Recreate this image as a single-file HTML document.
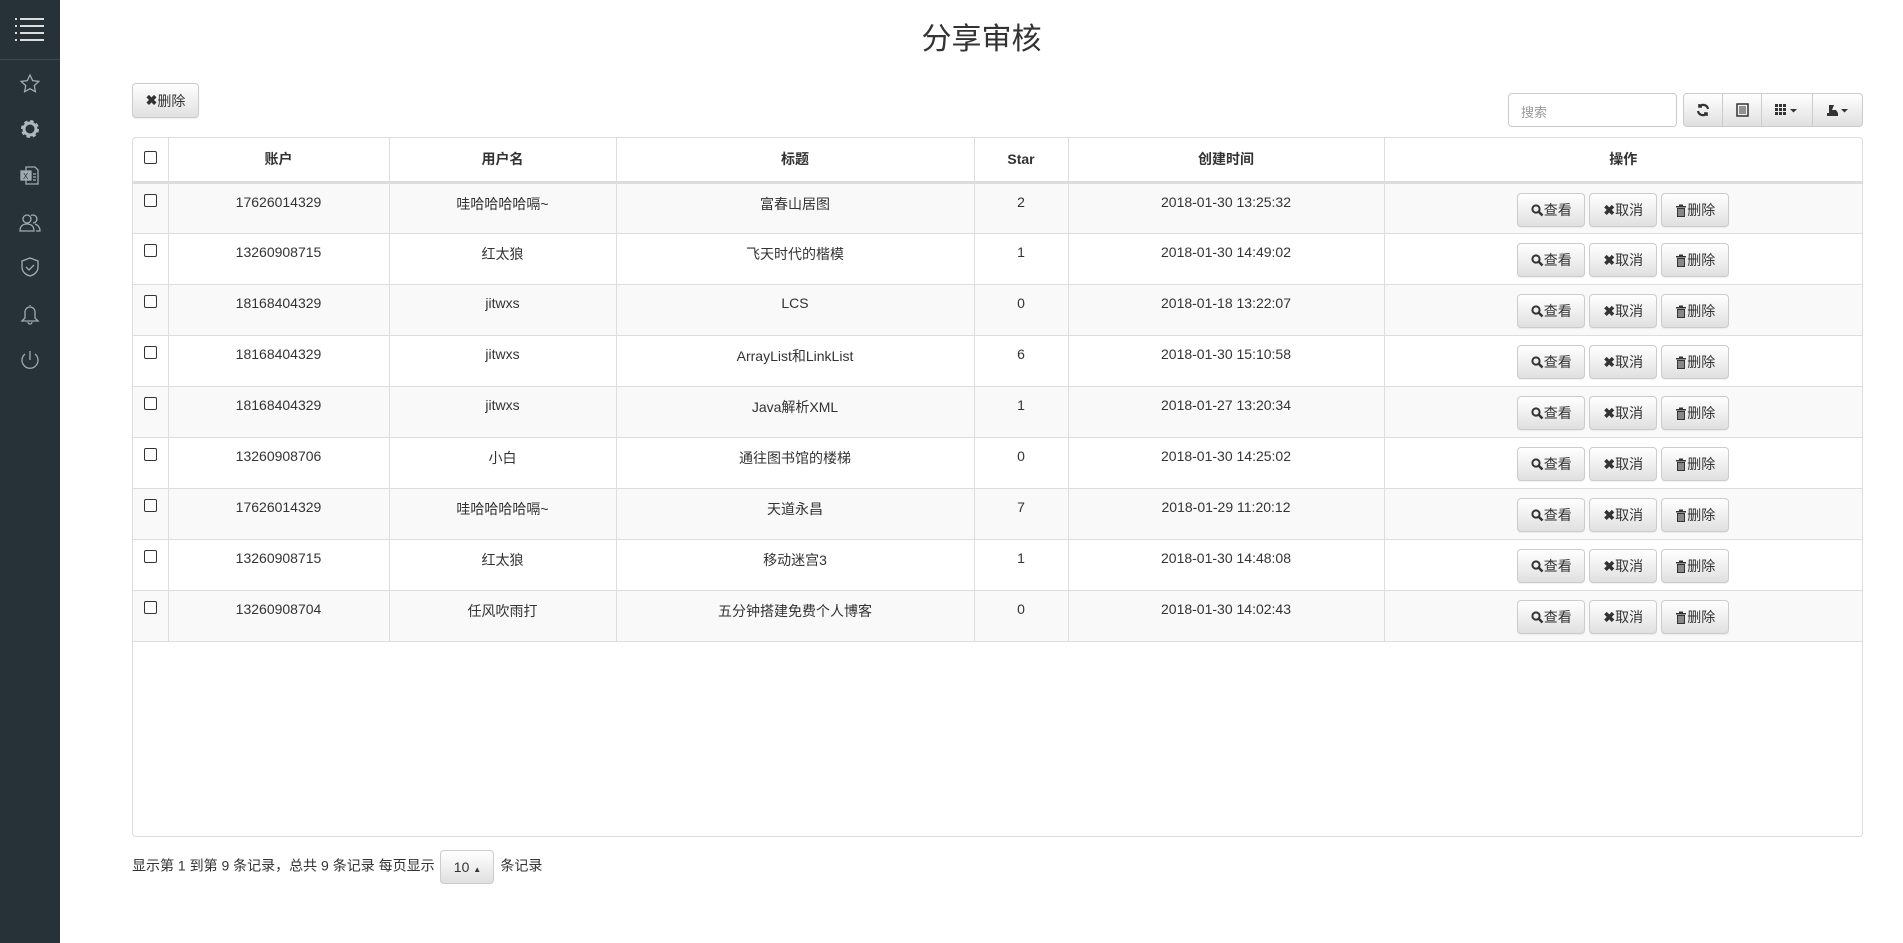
<!DOCTYPE html>
<html><head><meta charset="utf-8"><style>
*{box-sizing:border-box;margin:0;padding:0}
body{width:1903px;height:943px;background:#fff;font-family:"Liberation Sans","Noto Sans CJK SC",sans-serif;font-size:14px;color:#333;position:relative;overflow:hidden}
.side{position:absolute;left:0;top:0;width:60px;height:943px;background:#263238}
.side .top{height:60px;border-bottom:1px solid #3c4a52}
.ico{position:absolute;left:18px;width:24px;height:24px}
h1{position:absolute;left:60px;right:0;top:14px;text-align:center;font-size:30px;font-weight:normal;color:#333}
.btn{position:absolute;border:1px solid #ccc;border-radius:4px;background:linear-gradient(#fff,#e0e0e0);display:flex;align-items:center;justify-content:center;font-size:14px;color:#333;box-shadow:0 1px 1px rgba(0,0,0,.08)}
.search{position:absolute;left:1508px;top:93px;width:169px;height:34px;border:1px solid #ccc;border-radius:4px;padding:8px 12px;color:#999;font-size:13px}
.tb{position:absolute;top:93px;height:34px;border:1px solid #ccc;background:linear-gradient(#fff,#e0e0e0);display:flex;align-items:center;justify-content:center}
.wrap{position:absolute;left:132px;top:137px;width:1731px;height:700px;border:1px solid #ddd;border-radius:4px}
table{border-collapse:collapse;width:100%;table-layout:fixed}
th{height:44px;font-weight:bold;border-left:1px solid #ddd;border-bottom:3px solid #ddd;text-align:center;font-size:14px}
td{height:51px;border-left:1px solid #ddd;border-top:1px solid #ddd;text-align:center;vertical-align:top;padding-top:10px}
th:first-child,td:first-child{border-left:none}
tr.odd td{background:#f9f9f9}
.cb{display:inline-block;width:13px;height:13px;border:1px solid #333;background:#fff;border-radius:2px}
td.op{padding-top:9px;white-space:nowrap}
.ob{display:inline-block;width:68px;height:34px;line-height:32px;border:1px solid #ccc;border-radius:4px;background:linear-gradient(#fff,#e0e0e0);margin:0 2px;vertical-align:top;font-size:14px;box-shadow:0 1px 1px rgba(0,0,0,.06)}
.ob svg{vertical-align:-2px}
.foot{position:absolute;left:132px;top:850px;font-size:14px}
</style></head><body>
<div class="side"><div class="top">
<svg style="position:absolute;left:15px;top:17px" width="30" height="25"><g fill="#ddd"><rect x="0" y="1" width="2" height="2"/><rect x="0" y="8" width="2" height="2"/><rect x="0" y="15" width="2" height="2"/><rect x="0" y="22" width="2" height="2"/><rect x="5" y="1" width="24" height="2"/><rect x="5" y="8" width="24" height="2"/><rect x="5" y="15" width="24" height="2"/><rect x="5" y="22" width="24" height="2"/></g></svg></div>
<svg class="ico" style="top:72px" viewBox="0 0 24 24" fill="none" stroke="#a0aab2" stroke-width="1.3"><path d="M12 3l2.7 5.6 6.1.8-4.5 4.2 1.1 6.1L12 16.8l-5.4 2.9 1.1-6.1L3.2 9.4l6.1-.8z"/></svg>
<svg class="ico" style="top:117px" viewBox="0 0 24 24"><circle cx="12" cy="12" r="7" fill="none" stroke="#b0b8be" stroke-width="4" stroke-dasharray="3 2.5"/><circle cx="12" cy="12" r="6" fill="none" stroke="#b0b8be" stroke-width="3"/></svg>
<svg class="ico" style="top:163px" viewBox="0 0 24 24" fill="none" stroke="#a0aab2" stroke-width="1.3"><path d="M8 4h9l3 3v14H8z"/><rect x="3" y="8" width="10" height="9" fill="#a0aab2"/><text x="5" y="16" font-size="8" fill="#263238" stroke="none" font-family="Liberation Sans">X</text><path d="M15 11h3M15 14h3M15 17h3"/></svg>
<svg class="ico" style="top:210px" viewBox="0 0 24 24" fill="none" stroke="#a0aab2" stroke-width="1.3"><circle cx="9" cy="9" r="4"/><path d="M2 21c0-5 3-7 7-7s7 2 7 7z"/><path d="M13 5.5a4 4 0 1 1 2 7.5M17 14c3 1 5 3 5 7h-4"/></svg>
<svg class="ico" style="top:255px" viewBox="0 0 24 24" fill="none" stroke="#a0aab2" stroke-width="1.3"><path d="M12 3l8 3v6c0 5-4 8-8 9-4-1-8-4-8-9V6z"/><path d="M8 12l3 3 5-5"/></svg>
<svg class="ico" style="top:302px" viewBox="0 0 24 24" fill="none" stroke="#a0aab2" stroke-width="1.3"><path d="M12 3v1M7 10a5 5 0 0 1 10 0v6l3 3H4l3-3z"/><path d="M10 20a2 2 0 0 0 4 0"/></svg>
<svg class="ico" style="top:348px" viewBox="0 0 24 24" fill="none" stroke="#a0aab2" stroke-width="1.3"><path d="M12 3v9M7 6a8 8 0 1 0 10 0"/></svg>
</div>
<h1>分享审核</h1>
<div class="btn" style="left:132px;top:83px;width:67px;height:35px"><b style="font-size:14px">✖</b>删除</div>
<div class="search">搜索</div>
<div class="tb" style="left:1683px;width:40px;border-radius:4px 0 0 4px"><svg width="14" height="14" viewBox="0 0 14 14" fill="none" stroke="#333" stroke-width="2.2"><path d="M12 6a5 5 0 0 0-9-2M2 8a5 5 0 0 0 9 2"/><path d="M3 1v3h3M11 13v-3H8" stroke-width="1.6"/></svg></div>
<div class="tb" style="left:1722px;width:40px"><svg width="13" height="14"><rect x="1" y="1" width="11" height="12" fill="none" stroke="#333" stroke-width="1.5"/><path d="M3 4h7M3 6h7M3 8h7M3 10h7" stroke="#333"/></svg></div>
<div class="tb" style="left:1761px;width:52px"><svg width="24" height="12"><g fill="#333"><rect x="0" y="0" width="3" height="3"/><rect x="4" y="0" width="3" height="3"/><rect x="8" y="0" width="3" height="3"/><rect x="0" y="4" width="3" height="3"/><rect x="4" y="4" width="3" height="3"/><rect x="8" y="4" width="3" height="3"/><rect x="0" y="8" width="3" height="3"/><rect x="4" y="8" width="3" height="3"/><rect x="8" y="8" width="3" height="3"/><path d="M15 5h7l-3.5 3.5z"/></g></svg></div>
<div class="tb" style="left:1812px;width:51px;border-radius:0 4px 4px 0"><svg width="24" height="14"><g fill="#333"><path d="M1 10h11v3H1z"/><path d="M3 2h5l-2 5h4l2 3H3z"/><path d="M15 6h7l-3.5 3.5z"/></g></svg></div>
<div class="wrap"><table>
<colgroup><col style="width:35px"><col style="width:221px"><col style="width:227px"><col style="width:358px"><col style="width:94px"><col style="width:316px"><col></colgroup>
<tr><th><span class="cb"></span></th><th>账户</th><th>用户名</th><th>标题</th><th>Star</th><th>创建时间</th><th>操作</th></tr>
<!--R-->
<tr class="odd"><td><span class="cb"></span></td><td>17626014329</td><td>哇哈哈哈哈嗝~</td><td>富春山居图</td><td>2</td><td>2018-01-30 13:25:32</td><td class="op"><span class="ob"><svg width="13" height="13" viewBox="0 0 13 13"><circle cx="5" cy="5" r="3.6" fill="none" stroke="#333" stroke-width="2"/><path d="M7.5 7.5l4 4" stroke="#333" stroke-width="2.5"/></svg>查看</span><span class="ob"><b>✖</b>取消</span><span class="ob"><svg width="12" height="13" viewBox="0 0 12 13"><path d="M1 2h10v1.5H1zM4 0.5h4v1.5H4zM2 4h8v9H2z" fill="#333"/><path d="M4 5v7M6 5v7M8 5v7" stroke="#ddd"/></svg>删除</span></td></tr>
<tr><td><span class="cb"></span></td><td>13260908715</td><td>红太狼</td><td>飞天时代的楷模</td><td>1</td><td>2018-01-30 14:49:02</td><td class="op"><span class="ob"><svg width="13" height="13" viewBox="0 0 13 13"><circle cx="5" cy="5" r="3.6" fill="none" stroke="#333" stroke-width="2"/><path d="M7.5 7.5l4 4" stroke="#333" stroke-width="2.5"/></svg>查看</span><span class="ob"><b>✖</b>取消</span><span class="ob"><svg width="12" height="13" viewBox="0 0 12 13"><path d="M1 2h10v1.5H1zM4 0.5h4v1.5H4zM2 4h8v9H2z" fill="#333"/><path d="M4 5v7M6 5v7M8 5v7" stroke="#ddd"/></svg>删除</span></td></tr>
<tr class="odd"><td><span class="cb"></span></td><td>18168404329</td><td>jitwxs</td><td>LCS</td><td>0</td><td>2018-01-18 13:22:07</td><td class="op"><span class="ob"><svg width="13" height="13" viewBox="0 0 13 13"><circle cx="5" cy="5" r="3.6" fill="none" stroke="#333" stroke-width="2"/><path d="M7.5 7.5l4 4" stroke="#333" stroke-width="2.5"/></svg>查看</span><span class="ob"><b>✖</b>取消</span><span class="ob"><svg width="12" height="13" viewBox="0 0 12 13"><path d="M1 2h10v1.5H1zM4 0.5h4v1.5H4zM2 4h8v9H2z" fill="#333"/><path d="M4 5v7M6 5v7M8 5v7" stroke="#ddd"/></svg>删除</span></td></tr>
<tr><td><span class="cb"></span></td><td>18168404329</td><td>jitwxs</td><td>ArrayList和LinkList</td><td>6</td><td>2018-01-30 15:10:58</td><td class="op"><span class="ob"><svg width="13" height="13" viewBox="0 0 13 13"><circle cx="5" cy="5" r="3.6" fill="none" stroke="#333" stroke-width="2"/><path d="M7.5 7.5l4 4" stroke="#333" stroke-width="2.5"/></svg>查看</span><span class="ob"><b>✖</b>取消</span><span class="ob"><svg width="12" height="13" viewBox="0 0 12 13"><path d="M1 2h10v1.5H1zM4 0.5h4v1.5H4zM2 4h8v9H2z" fill="#333"/><path d="M4 5v7M6 5v7M8 5v7" stroke="#ddd"/></svg>删除</span></td></tr>
<tr class="odd"><td><span class="cb"></span></td><td>18168404329</td><td>jitwxs</td><td>Java解析XML</td><td>1</td><td>2018-01-27 13:20:34</td><td class="op"><span class="ob"><svg width="13" height="13" viewBox="0 0 13 13"><circle cx="5" cy="5" r="3.6" fill="none" stroke="#333" stroke-width="2"/><path d="M7.5 7.5l4 4" stroke="#333" stroke-width="2.5"/></svg>查看</span><span class="ob"><b>✖</b>取消</span><span class="ob"><svg width="12" height="13" viewBox="0 0 12 13"><path d="M1 2h10v1.5H1zM4 0.5h4v1.5H4zM2 4h8v9H2z" fill="#333"/><path d="M4 5v7M6 5v7M8 5v7" stroke="#ddd"/></svg>删除</span></td></tr>
<tr><td><span class="cb"></span></td><td>13260908706</td><td>小白</td><td>通往图书馆的楼梯</td><td>0</td><td>2018-01-30 14:25:02</td><td class="op"><span class="ob"><svg width="13" height="13" viewBox="0 0 13 13"><circle cx="5" cy="5" r="3.6" fill="none" stroke="#333" stroke-width="2"/><path d="M7.5 7.5l4 4" stroke="#333" stroke-width="2.5"/></svg>查看</span><span class="ob"><b>✖</b>取消</span><span class="ob"><svg width="12" height="13" viewBox="0 0 12 13"><path d="M1 2h10v1.5H1zM4 0.5h4v1.5H4zM2 4h8v9H2z" fill="#333"/><path d="M4 5v7M6 5v7M8 5v7" stroke="#ddd"/></svg>删除</span></td></tr>
<tr class="odd"><td><span class="cb"></span></td><td>17626014329</td><td>哇哈哈哈哈嗝~</td><td>天道永昌</td><td>7</td><td>2018-01-29 11:20:12</td><td class="op"><span class="ob"><svg width="13" height="13" viewBox="0 0 13 13"><circle cx="5" cy="5" r="3.6" fill="none" stroke="#333" stroke-width="2"/><path d="M7.5 7.5l4 4" stroke="#333" stroke-width="2.5"/></svg>查看</span><span class="ob"><b>✖</b>取消</span><span class="ob"><svg width="12" height="13" viewBox="0 0 12 13"><path d="M1 2h10v1.5H1zM4 0.5h4v1.5H4zM2 4h8v9H2z" fill="#333"/><path d="M4 5v7M6 5v7M8 5v7" stroke="#ddd"/></svg>删除</span></td></tr>
<tr><td><span class="cb"></span></td><td>13260908715</td><td>红太狼</td><td>移动迷宫3</td><td>1</td><td>2018-01-30 14:48:08</td><td class="op"><span class="ob"><svg width="13" height="13" viewBox="0 0 13 13"><circle cx="5" cy="5" r="3.6" fill="none" stroke="#333" stroke-width="2"/><path d="M7.5 7.5l4 4" stroke="#333" stroke-width="2.5"/></svg>查看</span><span class="ob"><b>✖</b>取消</span><span class="ob"><svg width="12" height="13" viewBox="0 0 12 13"><path d="M1 2h10v1.5H1zM4 0.5h4v1.5H4zM2 4h8v9H2z" fill="#333"/><path d="M4 5v7M6 5v7M8 5v7" stroke="#ddd"/></svg>删除</span></td></tr>
<tr class="odd"><td><span class="cb"></span></td><td>13260908704</td><td>任风吹雨打</td><td>五分钟搭建免费个人博客</td><td>0</td><td>2018-01-30 14:02:43</td><td class="op"><span class="ob"><svg width="13" height="13" viewBox="0 0 13 13"><circle cx="5" cy="5" r="3.6" fill="none" stroke="#333" stroke-width="2"/><path d="M7.5 7.5l4 4" stroke="#333" stroke-width="2.5"/></svg>查看</span><span class="ob"><b>✖</b>取消</span><span class="ob"><svg width="12" height="13" viewBox="0 0 12 13"><path d="M1 2h10v1.5H1zM4 0.5h4v1.5H4zM2 4h8v9H2z" fill="#333"/><path d="M4 5v7M6 5v7M8 5v7" stroke="#ddd"/></svg>删除</span></td></tr>
<tr><td colspan="7" style="height:0;padding:0"></td></tr>
</table></div>
<div class="foot">显示第 1 到第 9 条记录，总共 9 条记录 每页显示 <span style="display:inline-block;width:54px;height:34px;line-height:32px;border:1px solid #ccc;border-radius:4px;background:linear-gradient(#fff,#e0e0e0);text-align:center;vertical-align:middle;margin:0 2px">10 <span style="font-size:8px">▲</span></span> 条记录</div>
</body></html>
